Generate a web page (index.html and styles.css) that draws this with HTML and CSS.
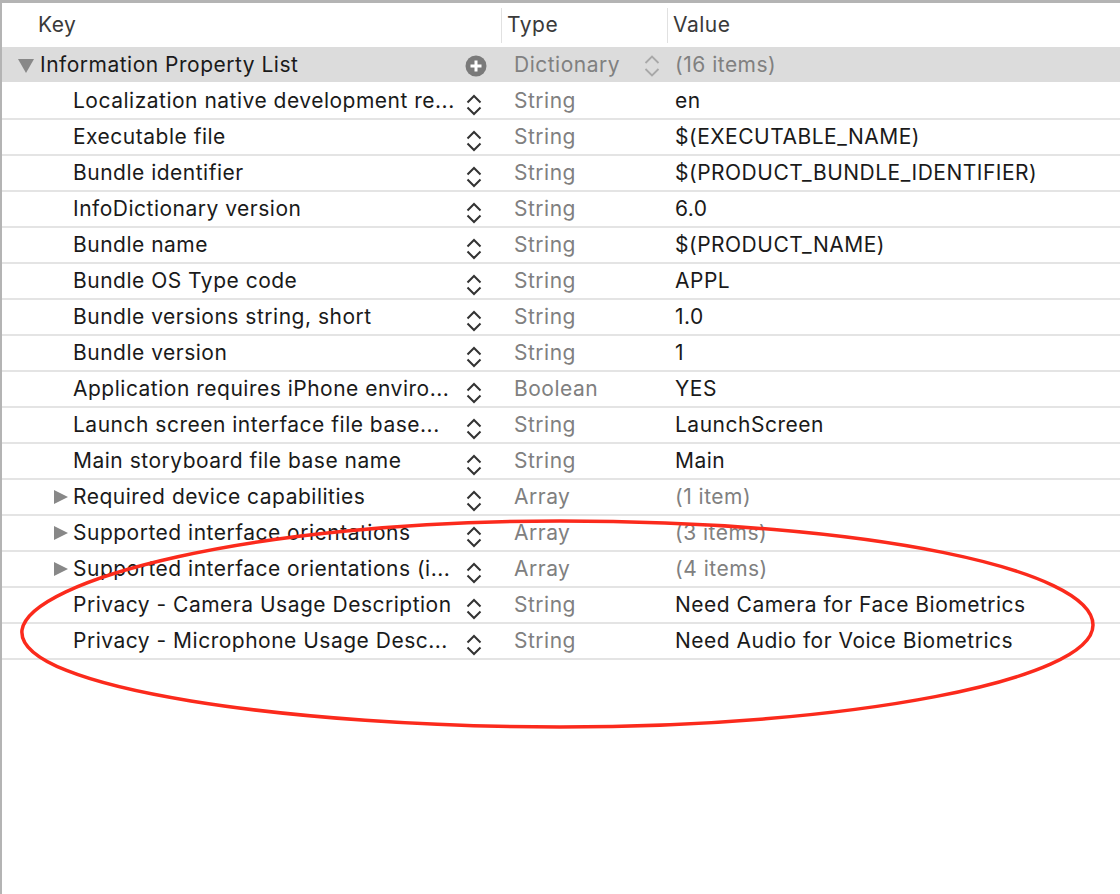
FILE: index.html
```html
<!DOCTYPE html>
<html>
<head>
<meta charset="utf-8">
<link rel="stylesheet" href="styles.css">
</head>
<body>
<div class="plist">
  <div class="header">
    <div class="h-cell h-key">Key</div>
    <div class="h-cell h-type">Type</div>
    <div class="h-cell h-value">Value</div>
  </div>

  <div class="row root">
    <div class="key"><span class="slot"><span class="tri-down"></span></span><span class="txt">Information Property List</span></div>
    <div class="ctl"><svg class="plus" width="22" height="22" viewBox="0 0 22 22"><circle cx="11" cy="11" r="10.5" fill="#7a7a7a"/><path d="M11 5.5v11M5.5 11h11" stroke="#fff" stroke-width="3"/></svg></div>
    <div class="type">Dictionary<svg class="step light" width="16" height="24" viewBox="0 0 16 24"><path d="M1.5 9 8 2.5 14.5 9M1.5 15 8 21.5 14.5 15" fill="none" stroke="#a8a8a8" stroke-width="1.8"/></svg></div>
    <div class="value dim">(16 items)</div>
  </div>

  <div class="row"><div class="key"><span class="slot"></span><span class="txt">Localization native development re...</span></div><div class="ctl"><svg class="step" width="16" height="22" viewBox="0 0 16 22"><path d="M1.5 8.5 8 2 14.5 8.5M1.5 13.5 8 20 14.5 13.5" fill="none" stroke="#333" stroke-width="2"/></svg></div><div class="type">String</div><div class="value">en</div></div>
  <div class="row"><div class="key"><span class="slot"></span><span class="txt">Executable file</span></div><div class="ctl"><svg class="step" width="16" height="22" viewBox="0 0 16 22"><path d="M1.5 8.5 8 2 14.5 8.5M1.5 13.5 8 20 14.5 13.5" fill="none" stroke="#333" stroke-width="2"/></svg></div><div class="type">String</div><div class="value">$(EXECUTABLE_NAME)</div></div>
  <div class="row"><div class="key"><span class="slot"></span><span class="txt">Bundle identifier</span></div><div class="ctl"><svg class="step" width="16" height="22" viewBox="0 0 16 22"><path d="M1.5 8.5 8 2 14.5 8.5M1.5 13.5 8 20 14.5 13.5" fill="none" stroke="#333" stroke-width="2"/></svg></div><div class="type">String</div><div class="value">$(PRODUCT_BUNDLE_IDENTIFIER)</div></div>
  <div class="row"><div class="key"><span class="slot"></span><span class="txt">InfoDictionary version</span></div><div class="ctl"><svg class="step" width="16" height="22" viewBox="0 0 16 22"><path d="M1.5 8.5 8 2 14.5 8.5M1.5 13.5 8 20 14.5 13.5" fill="none" stroke="#333" stroke-width="2"/></svg></div><div class="type">String</div><div class="value">6.0</div></div>
  <div class="row"><div class="key"><span class="slot"></span><span class="txt">Bundle name</span></div><div class="ctl"><svg class="step" width="16" height="22" viewBox="0 0 16 22"><path d="M1.5 8.5 8 2 14.5 8.5M1.5 13.5 8 20 14.5 13.5" fill="none" stroke="#333" stroke-width="2"/></svg></div><div class="type">String</div><div class="value">$(PRODUCT_NAME)</div></div>
  <div class="row"><div class="key"><span class="slot"></span><span class="txt">Bundle OS Type code</span></div><div class="ctl"><svg class="step" width="16" height="22" viewBox="0 0 16 22"><path d="M1.5 8.5 8 2 14.5 8.5M1.5 13.5 8 20 14.5 13.5" fill="none" stroke="#333" stroke-width="2"/></svg></div><div class="type">String</div><div class="value">APPL</div></div>
  <div class="row"><div class="key"><span class="slot"></span><span class="txt">Bundle versions string, short</span></div><div class="ctl"><svg class="step" width="16" height="22" viewBox="0 0 16 22"><path d="M1.5 8.5 8 2 14.5 8.5M1.5 13.5 8 20 14.5 13.5" fill="none" stroke="#333" stroke-width="2"/></svg></div><div class="type">String</div><div class="value">1.0</div></div>
  <div class="row"><div class="key"><span class="slot"></span><span class="txt">Bundle version</span></div><div class="ctl"><svg class="step" width="16" height="22" viewBox="0 0 16 22"><path d="M1.5 8.5 8 2 14.5 8.5M1.5 13.5 8 20 14.5 13.5" fill="none" stroke="#333" stroke-width="2"/></svg></div><div class="type">String</div><div class="value">1</div></div>
  <div class="row"><div class="key"><span class="slot"></span><span class="txt">Application requires iPhone enviro...</span></div><div class="ctl"><svg class="step" width="16" height="22" viewBox="0 0 16 22"><path d="M1.5 8.5 8 2 14.5 8.5M1.5 13.5 8 20 14.5 13.5" fill="none" stroke="#333" stroke-width="2"/></svg></div><div class="type">Boolean</div><div class="value">YES</div></div>
  <div class="row"><div class="key"><span class="slot"></span><span class="txt">Launch screen interface file base...</span></div><div class="ctl"><svg class="step" width="16" height="22" viewBox="0 0 16 22"><path d="M1.5 8.5 8 2 14.5 8.5M1.5 13.5 8 20 14.5 13.5" fill="none" stroke="#333" stroke-width="2"/></svg></div><div class="type">String</div><div class="value">LaunchScreen</div></div>
  <div class="row"><div class="key"><span class="slot"></span><span class="txt">Main storyboard file base name</span></div><div class="ctl"><svg class="step" width="16" height="22" viewBox="0 0 16 22"><path d="M1.5 8.5 8 2 14.5 8.5M1.5 13.5 8 20 14.5 13.5" fill="none" stroke="#333" stroke-width="2"/></svg></div><div class="type">String</div><div class="value">Main</div></div>
  <div class="row"><div class="key"><span class="slot"><span class="tri-right"></span></span><span class="txt">Required device capabilities</span></div><div class="ctl"><svg class="step" width="16" height="22" viewBox="0 0 16 22"><path d="M1.5 8.5 8 2 14.5 8.5M1.5 13.5 8 20 14.5 13.5" fill="none" stroke="#333" stroke-width="2"/></svg></div><div class="type">Array</div><div class="value dim">(1 item)</div></div>
  <div class="row"><div class="key"><span class="slot"><span class="tri-right"></span></span><span class="txt">Supported interface orientations</span></div><div class="ctl"><svg class="step" width="16" height="22" viewBox="0 0 16 22"><path d="M1.5 8.5 8 2 14.5 8.5M1.5 13.5 8 20 14.5 13.5" fill="none" stroke="#333" stroke-width="2"/></svg></div><div class="type">Array</div><div class="value dim">(3 items)</div></div>
  <div class="row"><div class="key"><span class="slot"><span class="tri-right"></span></span><span class="txt">Supported interface orientations (i...</span></div><div class="ctl"><svg class="step" width="16" height="22" viewBox="0 0 16 22"><path d="M1.5 8.5 8 2 14.5 8.5M1.5 13.5 8 20 14.5 13.5" fill="none" stroke="#333" stroke-width="2"/></svg></div><div class="type">Array</div><div class="value dim">(4 items)</div></div>
  <div class="row"><div class="key"><span class="slot"></span><span class="txt">Privacy - Camera Usage Description</span></div><div class="ctl"><svg class="step" width="16" height="22" viewBox="0 0 16 22"><path d="M1.5 8.5 8 2 14.5 8.5M1.5 13.5 8 20 14.5 13.5" fill="none" stroke="#333" stroke-width="2"/></svg></div><div class="type">String</div><div class="value">Need Camera for Face Biometrics</div></div>
  <div class="row"><div class="key"><span class="slot"></span><span class="txt">Privacy - Microphone Usage Desc...</span></div><div class="ctl"><svg class="step" width="16" height="22" viewBox="0 0 16 22"><path d="M1.5 8.5 8 2 14.5 8.5M1.5 13.5 8 20 14.5 13.5" fill="none" stroke="#333" stroke-width="2"/></svg></div><div class="type">String</div><div class="value">Need Audio for Voice Biometrics</div></div>

  <svg class="annot" width="1120" height="894" viewBox="0 0 1120 894">
    <path d="M22 630 C30 580 250 521 560 521 C870 521 1093 570 1093 625 C1093 680 850 727 560 727 C300 727 15 690 22 630 Z" fill="none" stroke="#fb2a1c" stroke-width="3.5"/>
  </svg>
</div>
</body>
</html>
```

FILE: styles.css
```css
html, body {
  margin: 0;
  padding: 0;
  background: #fff;
}

body {
  font-family: Inter, "Noto Sans", "Liberation Sans", sans-serif;
  font-size: 21px;
  letter-spacing: 0.5px;
  color: #1a1a1a;
}

.plist {
  position: relative;
  width: 1118px;
  height: 891px;
  border-left: 2px solid #b4b4b4;
  border-top: 3px solid #b4b4b4;
  overflow: hidden;
}

.header {
  display: grid;
  grid-template-columns: 499px 166px 1fr;
  height: 44px;
  align-items: center;
  color: #3a3a3a;
}

.h-cell {
  height: 35px;
  line-height: 33px;
}

.h-key {
  padding-left: 36px;
}

.h-type,
.h-value {
  border-left: 1px solid #e1e1e1;
  padding-left: 5px;
}

.row {
  display: grid;
  grid-template-columns: 460px 38px 167px 1fr;
  height: 34px;
  border-bottom: 2px solid #e4e4e4;
  align-items: center;
  white-space: nowrap;
}

.row.root {
  height: 35px;
  background: #dcdcdc;
  border-bottom-color: #fff;
}

.key,
.type,
.value {
  margin-top: -2px;
}

.root .key,
.root .type,
.root .value {
  margin-top: 0;
}

.key {
  display: flex;
  align-items: center;
  padding-left: 50px;
  overflow: hidden;
}

.slot {
  flex: none;
  width: 21px;
  display: flex;
  align-items: center;
  margin-top: 2px;
}

.root .key {
  padding-left: 16px;
}

.root .slot {
  width: 22px;
  margin-top: 0;
}

.tri-down {
  width: 0;
  height: 0;
  border-left: 8px solid transparent;
  border-right: 8px solid transparent;
  border-top: 14px solid #888;
  margin-top: 2px;
}

.tri-right {
  width: 0;
  height: 0;
  border-top: 7px solid transparent;
  border-bottom: 7px solid transparent;
  border-left: 14px solid #888;
  margin-left: 2px;
}

.ctl {
  display: flex;
  align-items: center;
  padding-left: 4px;
}

.step {
  display: block;
  margin-top: 7px;
}

.plus {
  display: block;
  margin-left: -1px;
  margin-top: 3px;
}

.type {
  display: flex;
  align-items: center;
  padding-left: 14px;
  padding-right: 7px;
  color: #808080;
}

.type .step.light {
  margin-left: auto;
  margin-top: 3px;
}

.value {
  padding-left: 8px;
}

.value.dim {
  color: #808080;
}

.annot {
  position: absolute;
  left: -2px;
  top: -3px;
  pointer-events: none;
}
```
